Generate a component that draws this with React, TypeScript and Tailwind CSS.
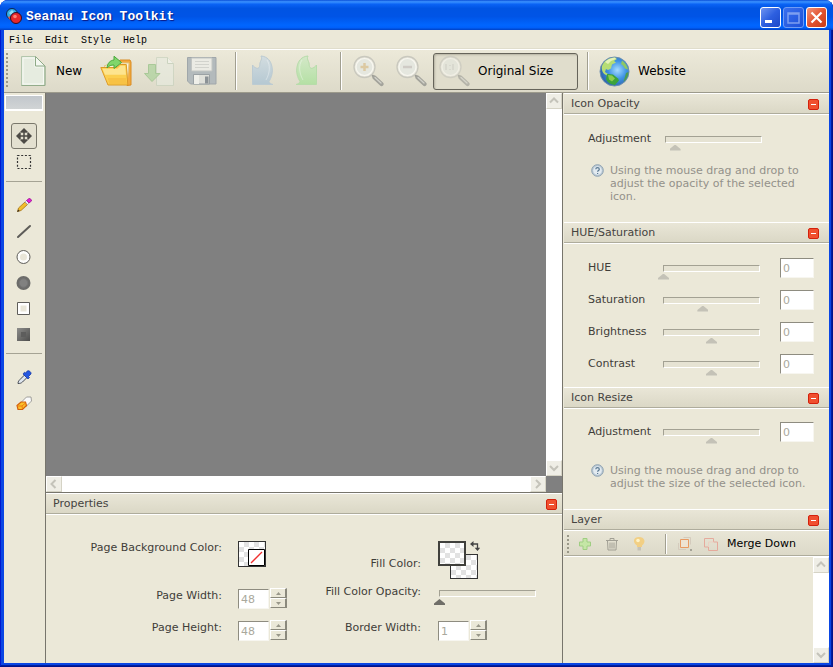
/**
 * Seanau Icon Toolkit - main window
 */

import { useId, useState } from 'react'
import type { ReactNode } from 'react'

// ============================================================
// Window chrome
// ============================================================

function TitleBar() {
  return (
    <header className="flex h-[30px] items-center rounded-t-lg bg-linear-[180deg,#0a4fd8_0%,#3b92ff_6%,#0a63f5_14%,#0054e3_28%,#0054e6_55%,#0066ff_84%,#0060fa_92%,#0041c4_100%] pr-1.5 pl-1.5">
      <svg className="mt-0.5 size-4" viewBox="0 0 16 16">
        <circle cx="6" cy="6" r="5.5" fill="#35aee4" stroke="#0b2450" />
        <path d="M3 5l3-3 2 2-3 3z" fill="#8fe0fa" />
        <path d="M2 9l3-1 1 3-2 1z" fill="#e94b3c" />
        <circle cx="10" cy="10" r="5.5" fill="#e5282a" stroke="#2a0f28" />
        <circle cx="9" cy="8.500" r="1.800" fill="#ff8374" />
      </svg>
      <h1 className="mt-1 ml-1 flex-1 font-['Liberation_Mono',monospace] text-[13px] leading-4 font-bold text-white [text-shadow:1px_1px_1px_#0a1883]">
        Seanau Icon Toolkit
      </h1>
      <div className="mt-1 flex gap-0.5">
        <button aria-label="Minimize" className="size-[21px] rounded-[3px] border border-white bg-linear-135 from-[#6f93f0] via-[#2d5fe0] to-[#1c48c8]">
          <svg viewBox="0 0 19 19"><path d="M4 12h7v3H4z" fill="#fff" /></svg>
        </button>
        <button aria-label="Maximize" disabled className="size-[21px] rounded-[3px] border border-[#6f9bf5] bg-linear-135 from-[#3a6fee] to-[#1d50d8]">
          <svg viewBox="0 0 19 19"><path d="M4 5h11v10H4zM4 6h11" fill="none" stroke="#7d9ff0" strokeWidth="1.5" /></svg>
        </button>
        <button aria-label="Close" className="size-[21px] rounded-[3px] border border-white bg-linear-135 from-[#f0937a] via-[#e35330] to-[#c93c14]">
          <svg viewBox="0 0 19 19"><path d="M4.500 4.500l10 10M14.500 4.500l-10 10" stroke="#fff" strokeWidth="2.200" /></svg>
        </button>
      </div>
    </header>
  )
}

function MenuBar() {
  return (
    <nav className="flex h-[19px] items-center gap-3 pl-[5px] font-['Liberation_Mono',monospace] text-[10px] leading-4 text-black">
      {['File', 'Edit', 'Style', 'Help'].map((m) => (
        <button key={m} className="pt-0.5">{m}</button>
      ))}
    </nav>
  )
}

function Grip({ short = false }: { short?: boolean }) {
  return (
    <div
      className={`w-[3px] bg-[radial-gradient(circle_at_1px_1px,#9a9888_1px,transparent_1px)] bg-[length:3px_4px] ${short ? 'h-[18px]' : 'h-9'}`}
    />
  )
}

function Divider({ short = false }: { short?: boolean }) {
  return <div className={`w-0.5 border-r border-l border-r-white border-l-[#a19f90] ${short ? 'h-5' : 'h-[38px]'}`} />
}

// ============================================================
// Main toolbar
// ============================================================

function Magnifier({ children, faint = false }: { children?: ReactNode; faint?: boolean }) {
  return (
    <svg className={`size-8 ${faint ? 'opacity-70' : ''}`} viewBox="0 0 32 32">
      <path d="M20 20l3 3" stroke="#9b9b94" strokeWidth="2" />
      <path d="M22.500 22.500l7 6.500" stroke="#a3a39b" strokeWidth="4.200" strokeLinecap="round" />
      <path d="M23 22.500l6 5.500" stroke="#d2d2ca" strokeWidth="1.300" strokeLinecap="round" />
      <circle cx="12.500" cy="12" r="10.500" fill="#eae9df" stroke="#c9c8be" strokeWidth="1.300" />
      <circle cx="12.500" cy="12" r="8.500" fill="#e5e7df" stroke="#f8f7f0" strokeWidth="1.200" />
      {children}
    </svg>
  )
}

function FlipShape({ from, to, line, mirror = false }: { from: string; to: string; line: string; mirror?: boolean }) {
  const id = useId()
  return (
    <svg className="size-8" viewBox="0 0 32 32">
      <defs>
        <linearGradient id={id} x1="0" y1="0" x2="0" y2="1">
          <stop offset="0" stopColor={from} />
          <stop offset="1" stopColor={to} />
        </linearGradient>
      </defs>
      <g transform={mirror ? 'matrix(-1 0 0 1 33 0)' : undefined}>
        <path d="M6.500 10v19.500h20.500c-2-.5-3.500-1.500-4-3 2.500-4 4-9 3-14.500C25 6 21.500 1.500 15 1c1 2 .5 3.500-.5 5.500-1 2-.5 3.500-1 5-.5 1.800-2 2.300-3.500 1.500S7.500 11.500 6.500 10z" fill={`url(#${id})`} stroke={line} />
        <path d="M21 5c3.500 5 3 13-1 20" fill="none" stroke="#fff" strokeOpacity=".35" />
      </g>
    </svg>
  )
}

function PageIcon() {
  return (
    <svg className="size-8" viewBox="0 0 32 32">
      <path d="M4.500 1.500h14l9.500 9.500v19.500H4.500z" fill="#e6ece0" stroke="#b3c6ac" />
      <path d="M28 11v19.500H4.500" fill="none" stroke="#93ac8b" />
      <path d="M6 3h12v9h8.500v17H6z" fill="none" stroke="#f7faf4" />
      <path d="M18.500 1.500v9.500H28z" fill="#f4f8f1" stroke="#8eaa87" />
    </svg>
  )
}

function FolderIcon() {
  return (
    <svg className="size-8" viewBox="0 0 32 32">
      <path d="M17 10l3-5h10l1 2v23l-4 .5z" fill="#f3a93c" stroke="#d98c25" />
      <path d="M4 11l8-3h17l-2 21z" fill="#faf3dc" stroke="#dfc68a" />
      <path d="M.8 12.500h16l3-3h6.500l1.500 20.500H8z" fill="#fbcf50" stroke="#dd9a26" />
      <path d="M2.500 13.800h15l3-3h4.500l1 9H5z" fill="#fde48e" />
      <path d="M8 24h18M8.500 26h18M9 28h18" stroke="#f4b53b" />
      <path d="M7 13c.5-5 3-7.500 7-8V1.200l7.500 6.300-7.500 6V10c-3 0-5 .8-7 3z" fill="#7fd66a" stroke="#4ba83c" />
    </svg>
  )
}

function ImportIcon() {
  return (
    <svg className="size-8 opacity-60" viewBox="0 0 32 32">
      <path d="M13.500 2.500h11l6 6v22h-17z" fill="#e8ece1" stroke="#c3cfbb" />
      <path d="M24.500 2.500v6h6" fill="#f6f8f2" stroke="#b9c9b2" />
      <path d="M5.500 9.500h7v9h4.500L9 26.500 1.500 18.500h4z" fill="#a2cf92" stroke="#82b873" />
    </svg>
  )
}

function SaveIcon() {
  return (
    <svg className="size-8" viewBox="0 0 32 32">
      <path d="M1.500 2.500h28.500v26.500H4.500l-3-3z" fill="#b3babc" stroke="#a0a7aa" />
      <path d="M5.500 3h20.500v13H5.500z" fill="#ebebe4" stroke="#c2c5c2" />
      <path d="M9 6.500h14M9 9.500h14M9 12.500h14" stroke="#d2d3cd" />
      <path d="M7.500 19.500h16v9.500h-16z" fill="#dfe0da" stroke="#9aa1a4" />
      <path d="M19 21.500h3.500v7H19z" fill="#8b9296" />
      <path d="M8 20h5v9H8z" fill="#efefe9" />
    </svg>
  )
}

function GlobeIcon() {
  return (
    <svg className="size-8" viewBox="0 0 32 32">
      <defs>
        <radialGradient id="sea" cx=".6" cy=".45" r=".62">
          <stop offset="0" stopColor="#a5dcff" />
          <stop offset=".5" stopColor="#3f93e4" />
          <stop offset="1" stopColor="#2a5fa8" />
        </radialGradient>
      </defs>
      <circle cx="16.500" cy="16.500" r="14.500" fill="url(#sea)" stroke="#6d8fae" />
      <path d="M4 11C6 6 11 2.500 17 2.500l2 1.500-3 2 2 1.500-4 2-1 4-3 1.500-2-1-1 3 3 2-1 1.500C5 19 3 15 4 11z" fill="#b6dd74" />
      <path d="M7 7c3-3 6-4 10-4.500l1 1.500-5 2-3 3z" fill="#e4f2b8" />
      <path d="M9 19l6 .5 5 4 1 2-4 4.500c-5-.5-8-3-9-6z" fill="#3ca33a" />
      <path d="M10 20l4 .5 3 3-3 3-3-2z" fill="#8ccc4c" />
      <path d="M24 5.500c3 2 5.500 5.500 6 9l-3-1-2-3-2-1.500z" fill="#8ec764" />
      <path d="M28 18l2.500-1c0 4-2 7.500-5 10z" fill="#4c9c52" />
    </svg>
  )
}

function Toolbar() {
  return (
    <div className="flex h-11 items-center border-t border-b border-t-white border-b-[#9c9a8c] bg-linear-to-b from-[#ece9d9] to-[#dddac9] pl-0.5 text-xs text-black shadow-[0_-1px_0_#e0ddcc]">
      <Grip />
      <div className="ml-2 flex gap-[11px]">
        <button className="flex w-[72px] items-center gap-[7px]"><PageIcon />New</button>
        <button aria-label="Open"><FolderIcon /></button>
        <button aria-label="Import" disabled><ImportIcon /></button>
        <button aria-label="Save" disabled><SaveIcon /></button>
      </div>
      <div className="mr-[9px] ml-[17px]"><Divider /></div>
      <div className="flex gap-3">
        <button aria-label="Undo" disabled><FlipShape from="#d3dde0" to="#b5c8d2" line="#bccbd2" /></button>
        <button aria-label="Redo" disabled><FlipShape from="#d4e8c8" to="#b4e0a4" line="#b7dcaa" mirror /></button>
      </div>
      <div className="mr-[10px] ml-[18px]"><Divider /></div>
      <div className="flex gap-[11px]">
        <button aria-label="Zoom in" disabled>
          <Magnifier><path d="M12.500 8v8M8.500 12h8" stroke="#dcc9a2" strokeWidth="2.500" /></Magnifier>
        </button>
        <button aria-label="Zoom out" disabled>
          <Magnifier><path d="M8 12h9" stroke="#cfcbc5" strokeWidth="2.500" /></Magnifier>
        </button>
      </div>
      <button className="ml-1.5 flex h-[37px] w-[145px] items-center gap-2 rounded-[3px] border border-[#66645a] bg-[#e0ddcc] pl-1 shadow-[inset_1px_1px_2px_#b5b2a2]">
        <Magnifier faint><path d="M8 9v6M12 10v1M12 14v1M15 9v6" stroke="#cfd2ca" strokeWidth="1.500" /></Magnifier>
        Original Size
      </button>
      <div className="mx-[9px]"><Divider /></div>
      <a href="#website" className="flex items-center gap-2"><GlobeIcon />Website</a>
    </div>
  )
}

// ============================================================
// Toolbox
// ============================================================

const TOOL_GROUPS: { name: string; icon: ReactNode }[][] = [
  [
    {
      name: 'Move',
      icon: (
        <>
          <path d="M8 0l4 4H4zM8 16l4-4H4zM0 8l4-4v8zM16 8l-4-4v8z" fill="#4d4b46" />
          <path d="M4.500 4.500h7v7h-7z" fill="#e3e0d0" stroke="#77756d" />
          <path d="M8 3v10M3 8h10" stroke="#4d4b46" strokeWidth="1.500" />
        </>
      ),
    },
    { name: 'Select', icon: <path d="M1.500 1.500h13v13h-13z" fill="none" stroke="#333" strokeWidth="1.200" strokeDasharray="2 1.700" /> },
  ],
  [
    {
      name: 'Pencil',
      icon: (
        <>
          <path d="M1.500 14.500l1-3.500L9 5l2.500 2.500L5 13.500z" fill="#f2bd2d" stroke="#a5731b" strokeWidth=".8" />
          <path d="M9 5l1.500-1.500L13 6l-1.500 1.500z" fill="#ededf5" stroke="#8a7a92" strokeWidth=".5" />
          <path d="M10.500 3.500L13 1.500c1.500 0 2.500 1 2.500 2.500L13 6z" fill="#e81ad8" stroke="#9b168f" strokeWidth=".8" />
          <path d="M1 15l1.200-2.500 1.500 1.500z" fill="#3a2f20" />
        </>
      ),
    },
    { name: 'Line', icon: <path d="M2 14L14 3" stroke="#5d5c58" strokeWidth="2" strokeLinecap="round" /> },
    {
      name: 'Ellipse',
      icon: <><circle cx="7.500" cy="8" r="6.500" fill="#fdfdfb" stroke="#5f5e5a" /><circle cx="7.500" cy="8" r="3.500" fill="#e9e6d8" /></>,
    },
    {
      name: 'Filled ellipse',
      icon: <><circle cx="7.500" cy="8" r="7" fill="#6c6c6a" /><circle cx="7.500" cy="8" r="4.200" fill="#818180" stroke="#777" /></>,
    },
    {
      name: 'Rectangle',
      icon: <><path d="M1.500 1.500h12v12h-12z" fill="#fff" stroke="#5f5e5a" /><path d="M4.500 4.500h6v6h-6z" fill="#e9e6d8" /></>,
    },
    {
      name: 'Filled rectangle',
      icon: (
        <>
          <defs>
            <linearGradient id="solid" x1="0" y1="0" x2="1" y2="1">
              <stop offset="0" stopColor="#8d8d8b" />
              <stop offset="1" stopColor="#4c4c4b" />
            </linearGradient>
          </defs>
          <path d="M1 1h13v13H1z" fill="url(#solid)" />
          <path d="M5 5h5v5H5z" fill="#5d5d5c" />
        </>
      ),
    },
  ],
  [
    {
      name: 'Color picker',
      icon: (
        <>
          <path d="M2 14.500c0-2 1-3 2-4L8.500 6 11 8.500 6.500 13c-1.500 1.300-2.500 1.500-4.500 1.500z" fill="#dfe6ee" stroke="#474c55" />
          <path d="M7 5l5 5 1.500-1.500-1-1L15 5c.8-1.500-2-4-3.500-3.200L9.500 4l-1-.8z" fill="#2457e0" stroke="#14349c" strokeWidth=".7" />
        </>
      ),
    },
    {
      name: 'Eraser',
      icon: (
        <>
          <path d="M5 7.500L10.500 2H15l.5 4-6 6z" fill="#fafafa" stroke="#8b8a88" strokeWidth=".8" />
          <path d="M1 10.500l4-3.500h4.500l1 3.500-4 4H2z" fill="#fbc029" stroke="#d3600b" strokeWidth="1.200" />
          <path d="M1.500 11h4.500l3.500-3M6 11l.5 3" stroke="#ef7c12" fill="none" />
        </>
      ),
    },
  ],
]

function Toolbox() {
  const [active, setActive] = useState('Move')
  return (
    <aside className="flex w-[41px] shrink-0 flex-col items-center bg-[#ebe8d8] pr-px">
      <div className="mt-0.5 h-4 w-[38px] border border-b-2 border-white bg-linear-to-b from-[#c2c7cc] to-[#d1d4d5]" />
      <div className="h-3" />
      {TOOL_GROUPS.map((group, i) => (
        <div key={i} className="w-full">
          {i > 0 && <div className={`mx-0.5 border-t border-t-[#a5a394] ${i === 1 ? 'mt-1.5 mb-2.5' : 'mt-[5px] mb-2.5'}`} />}
          {group.map((tool) => (
            <button
              key={tool.name}
              aria-label={tool.name}
              onClick={() => setActive(tool.name)}
              className={`mx-auto flex size-[26px] items-center justify-center rounded-[3px] ${active === tool.name ? 'border border-[#7a786c] bg-[#e3e0d0]' : ''}`}
            >
              <svg className="size-4" viewBox="0 0 16 16">{tool.icon}</svg>
            </button>
          ))}
        </div>
      ))}
    </aside>
  )
}

// ============================================================
// Shared controls
// ============================================================

const ARROWS = {
  up: 'M4 9.500L8 5.500l4 4',
  down: 'M4 6l4 4 4-4',
  left: 'M9.500 4l-4 4 4 4',
  right: 'M6 4l4 4-4 4',
}

function ScrollButton({ dir }: { dir: keyof typeof ARROWS }) {
  return (
    <button aria-label={`Scroll ${dir}`} disabled className="size-4 shrink-0 border border-white border-r-[#d5d3c5] border-b-[#d5d3c5] bg-[#efeee6]">
      <svg viewBox="1 1 14 14"><path d={ARROWS[dir]} fill="none" stroke="#c4c3ba" strokeWidth="2" /></svg>
    </button>
  )
}

function Panel({ title, wide = false, children }: { title: string; wide?: boolean; children: ReactNode }) {
  const [open, setOpen] = useState(true)
  return (
    <>
      <div
        className={`flex h-[22px] shrink-0 items-center border-t border-b border-white bg-linear-to-b from-[#e9e6d7] to-[#dad7c5] pl-[7px] shadow-[inset_0_-1px_0_#aeac9c] ${wide ? 'pr-[5px]' : 'pr-2.5'}`}
      >
        <h2 className="flex-1 text-[#45433f]">{title}</h2>
        <button
          aria-label={`Collapse ${title}`}
          onClick={() => setOpen(!open)}
          className="size-[11px] rounded-[2px] border border-[#d3210c] bg-[#f0502f]"
        >
          <svg viewBox="0 0 9 9"><path d="M2 4h5v1H2z" fill="#fff" /></svg>
        </button>
      </div>
      {open && children}
    </>
  )
}

function Slider({ id, value, disabled = true }: { id: string; value: number; disabled?: boolean }) {
  // the thumb hangs below the groove, so groove and input share one grid cell
  return (
    <div className="grid h-[23px] w-[107px] shrink-0">
      <div className="col-start-1 row-start-1 mx-[5px] my-2 border border-white border-t-[#a3a193] border-l-[#a3a193] bg-[#e6e3d3]" />
      <input
        id={id}
        type="range"
        defaultValue={value}
        disabled={disabled}
        className="col-start-1 row-start-1 m-0 h-[23px] w-full appearance-none bg-transparent [&::-webkit-slider-runnable-track]:h-[23px] [&::-webkit-slider-thumb]:mt-[17px] [&::-webkit-slider-thumb]:h-1.5 [&::-webkit-slider-thumb]:w-[11px] [&::-webkit-slider-thumb]:appearance-none [&::-webkit-slider-thumb]:bg-[#6f6e68] [&::-webkit-slider-thumb]:[clip-path:polygon(50%_0,100%_75%,100%_100%,0_100%,0_75%)] disabled:[&::-webkit-slider-thumb]:bg-[#c4c2b7]"
      />
    </div>
  )
}

function NumberBox({ id, value }: { id: string; value: string }) {
  return (
    <input
      id={id}
      type="text"
      disabled
      defaultValue={value}
      className="h-5 w-[34px] shrink-0 border border-[#f7f6f0] border-t-[#8e8c80] border-l-[#8e8c80] bg-white pl-0.5 text-[#aaa89c]"
    />
  )
}

function Spinner({ id, value }: { id: string; value: string }) {
  return (
    <div className="flex gap-px">
      <input
        id={id}
        type="text"
        disabled
        defaultValue={value}
        className="mt-px h-5 w-[31px] border border-[#f7f6f0] border-t-[#8e8c80] border-l-[#8e8c80] bg-white pl-0.5 text-[#aaa89c]"
      />
      <div className="flex flex-col">
        {['up', 'down'].map((dir) => (
          <button
            key={dir}
            aria-label={`${dir} ${id}`}
            disabled
            className="flex h-2.5 w-[17px] items-center justify-center border border-white border-r-2 border-r-[#8b897c] border-b-[#8b897c] bg-[#ebe8d8]"
          >
            <svg className="h-[3px] w-[5px]" viewBox="0 0 5 3">
              <path d={dir === 'up' ? 'M0 3l2.500-3L5 3z' : 'M0 0h5L2.500 3z'} fill="#99978a" />
            </svg>
          </button>
        ))}
      </div>
    </div>
  )
}

function HelpNote({ children }: { children: ReactNode }) {
  return (
    <div className="flex gap-1.5 pl-[3px] text-[#93918a]">
      <svg className="size-[13px] shrink-0" viewBox="0 0 13 13">
        <circle cx="6.500" cy="6.500" r="5.800" fill="#b9c8d4" stroke="#8fa3b2" />
        <circle cx="6.500" cy="6.500" r="4.300" fill="#e2eaf0" />
        <path d="M4.800 5.200c0-2.200 3.500-2.200 3.500 0 0 1.300-1.700 1.200-1.700 2.600M6.600 8.900v1.200" fill="none" stroke="#5a7890" strokeWidth="1.200" />
      </svg>
      <p className="w-[205px] leading-[13px]">{children}</p>
    </div>
  )
}

// ============================================================
// Properties
// ============================================================

function Properties() {
  return (
    <section className="border-t border-[#77756c]">
      <Panel title="Properties" wide>
        <div className="flex h-[148px] gap-3.5 pt-[25px] leading-4 text-[#3f3d39]">
          <div className="grid grid-cols-[176px_auto] grid-rows-[48px_32px_32px] items-start gap-x-4 text-right">
            <span>Page Background Color:</span>
            <button aria-label="Page background color" className="mt-px flex h-[26px] w-7 items-end justify-end border border-[#333] bg-[conic-gradient(#e2e2e2_25%,#fff_0_50%,#e2e2e2_0_75%,#fff_0)] bg-[length:10px_10px]">
              <svg className="size-[17px]" viewBox="0 0 17 17">
                <path d="M.5.5h16v16H.5z" fill="#fff" stroke="#000" />
                <path d="M3 14L14 3" stroke="#f0302f" strokeWidth="1.300" />
              </svg>
            </button>
            <label htmlFor="page-width">Page Width:</label>
            <Spinner id="page-width" value="48" />
            <label htmlFor="page-height">Page Height:</label>
            <Spinner id="page-height" value="48" />
          </div>
          <div className="grid grid-cols-[120px_auto] grid-rows-[44px_36px_32px] items-start gap-x-[13px] text-right">
            <span className="self-center pt-1">Fill Color:</span>
            <div className="flex gap-1 pt-px pl-1">
              <div className="grid">
                <button aria-label="Border color" className="col-start-1 row-start-1 mt-[13px] ml-3 h-[25px] w-7 border border-[#333] bg-[conic-gradient(#e2e2e2_25%,#fff_0_50%,#e2e2e2_0_75%,#fff_0)] bg-[length:10px_10px]" />
                <button aria-label="Fill color" className="col-start-1 row-start-1 h-[25px] w-7 border-2 border-[#40403c] bg-[conic-gradient(#e2e2e2_25%,#fff_0_50%,#e2e2e2_0_75%,#fff_0)] bg-[length:10px_10px]" />
              </div>
              <button aria-label="Swap colors" className="-ml-3 h-2.5 w-2.5">
                <svg viewBox="0 0 10 10">
                  <path d="M2 3h5.500v4.500" fill="none" stroke="#444" strokeWidth="1.300" />
                  <path d="M0 3l3.500-3v6zM7.500 10L4.700 6.800h5.500z" fill="#444" />
                </svg>
              </button>
            </div>
            <label htmlFor="fill-opacity">Fill Color Opacity:</label>
            <div className="-mt-0.5"><Slider id="fill-opacity" value={0} disabled={false} /></div>
            <label htmlFor="border-width">Border Width:</label>
            <div className="pl-1"><Spinner id="border-width" value="1" /></div>
          </div>
        </div>
      </Panel>
    </section>
  )
}

// ============================================================
// Right side panels
// ============================================================

const HUE_ROWS = [
  { id: 'hue', label: 'HUE', value: 0 },
  { id: 'saturation', label: 'Saturation', value: 41 },
  { id: 'brightness', label: 'Brightness', value: 50 },
  { id: 'contrast', label: 'Contrast', value: 50 },
]

function LayerPanel() {
  return (
    <Panel title="Layer">
      <div className="flex h-[26px] shrink-0 items-center border-b border-white bg-linear-to-b from-[#e8e5d6] to-[#dcd9c8] pl-[3px] text-black shadow-[inset_0_-1px_0_#aeac9c]">
        <Grip short />
        <div className="ml-[7px] flex gap-[11px]">
          <button aria-label="Add layer" disabled>
            <svg className="size-4" viewBox="0 0 16 16"><path d="M6 2.500h4V6h3.500v4H10v3.500H6V10H2.500V6H6z" fill="#c5e6a6" stroke="#9fce82" /></svg>
          </button>
          <button aria-label="Delete layer" disabled>
            <svg className="size-4" viewBox="0 0 16 16">
              <path d="M2 4.500h12M6 4V2.500h4V4M3.500 5l.5 9h8l.5-9M6 6.500v6M8 6.500v6M10 6.500v6" fill="none" stroke="#a19f94" />
            </svg>
          </button>
          <button aria-label="Toggle layer" disabled>
            <svg className="size-4" viewBox="0 0 16 16">
              <path d="M8 1c5.500 0 7.500 5 3 8.500V11H6V9.500C1 6 2.500 1 8 1z" fill="#f2cf84" />
              <circle cx="7" cy="4.500" r="1.800" fill="#fdf2c8" />
              <path d="M6.500 11H10v3.500H6.500z" fill="#c6c3b7" />
            </svg>
          </button>
        </div>
        <div className="mr-2.5 ml-[18px]"><Divider short /></div>
        <button aria-label="Duplicate layer" disabled>
          <svg className="size-4" viewBox="0 0 16 16">
            <path d="M6.500 1.500h7v7M1.500 7v6.500H9" fill="none" stroke="#d4cbbd" />
            <path d="M3.500 3.500h8v8h-8z" fill="#eee3d2" stroke="#e89a62" />
            <path d="M13 13h2v2h-2z" fill="#a5a397" />
          </svg>
        </button>
        <button disabled className="ml-2.5 flex items-center gap-2">
          <svg className="size-4" viewBox="0 0 16 16">
            <path d="M1.500 2.500h9V6h4v8.500h-9V11h-4z" fill="none" stroke="#e5aa9c" />
            <path d="M5.500 6v5M5.500 6h5" stroke="#ecd0c3" fill="none" />
          </svg>
          Merge Down
        </button>
      </div>
      <div className="flex min-h-[106px] flex-1 justify-end">
        <div className="flex w-4 flex-col justify-between bg-white">
          <ScrollButton dir="up" />
          <ScrollButton dir="down" />
        </div>
      </div>
    </Panel>
  )
}

function SidePanels() {
  return (
    <aside className="flex w-[267px] shrink-0 flex-col border-l border-[#77756c] pl-px text-[#3f3d39]">
      <Panel title="Icon Opacity">
        <div className="h-[107px] pt-2 pl-6">
          <div className="mb-[9px] flex h-8 items-center">
            <label htmlFor="opacity" className="w-[72px]">Adjustment</label>
            <Slider id="opacity" value={10} />
          </div>
          <HelpNote>Using the mouse drag and drop to adjust the opacity of the selected icon.</HelpNote>
        </div>
      </Panel>
      <Panel title="HUE/Saturation">
        <div className="h-[143px] pt-2 pl-6">
          {HUE_ROWS.map((row) => (
            <div key={row.id} className="flex h-8 items-center">
              <label htmlFor={row.id} className="w-[70px]">{row.label}</label>
              <Slider id={row.id} value={row.value} />
              <div className="ml-[15px]"><NumberBox id={`${row.id}-value`} value="0" /></div>
            </div>
          ))}
        </div>
      </Panel>
      <Panel title="Icon Resize">
        <div className="h-[100px] pt-[7px] pl-6">
          <div className="mb-4 flex h-8 items-center">
            <label htmlFor="resize" className="w-[70px]">Adjustment</label>
            <Slider id="resize" value={50} />
            <div className="ml-[15px]"><NumberBox id="resize-value" value="0" /></div>
          </div>
          <HelpNote>Using the mouse drag and drop to adjust the size of the selected icon.</HelpNote>
        </div>
      </Panel>
      <LayerPanel />
    </aside>
  )
}

export default function App() {
  return (
    <div className="flex min-h-screen flex-col rounded-t-lg bg-[#0a46e4] font-['DejaVu_Sans',Verdana,sans-serif] text-[11px] leading-4 shadow-[inset_-1px_-1px_0_#00138c,inset_1px_0_0_#0019cf,inset_-2px_-2px_0_#001ea0]">
      <TitleBar />
      <div className="mx-1 mb-1 flex flex-1 flex-col bg-[#ebe8d8]">
        <MenuBar />
        <Toolbar />
        <main className="flex flex-1">
          <Toolbox />
          <div className="flex min-w-0 flex-1 flex-col border-l border-[#77756c]">
            <div className="flex flex-1 bg-[#808080]">
              <div className="flex-1" />
              <div className="flex w-4 flex-col justify-between bg-white">
                <ScrollButton dir="up" />
                <ScrollButton dir="down" />
              </div>
            </div>
            <div className="flex h-4 bg-[#808080] pr-4">
              <div className="flex flex-1 justify-between bg-white">
                <ScrollButton dir="left" />
                <ScrollButton dir="right" />
              </div>
            </div>
            <Properties />
          </div>
          <SidePanels />
        </main>
      </div>
    </div>
  )
}
